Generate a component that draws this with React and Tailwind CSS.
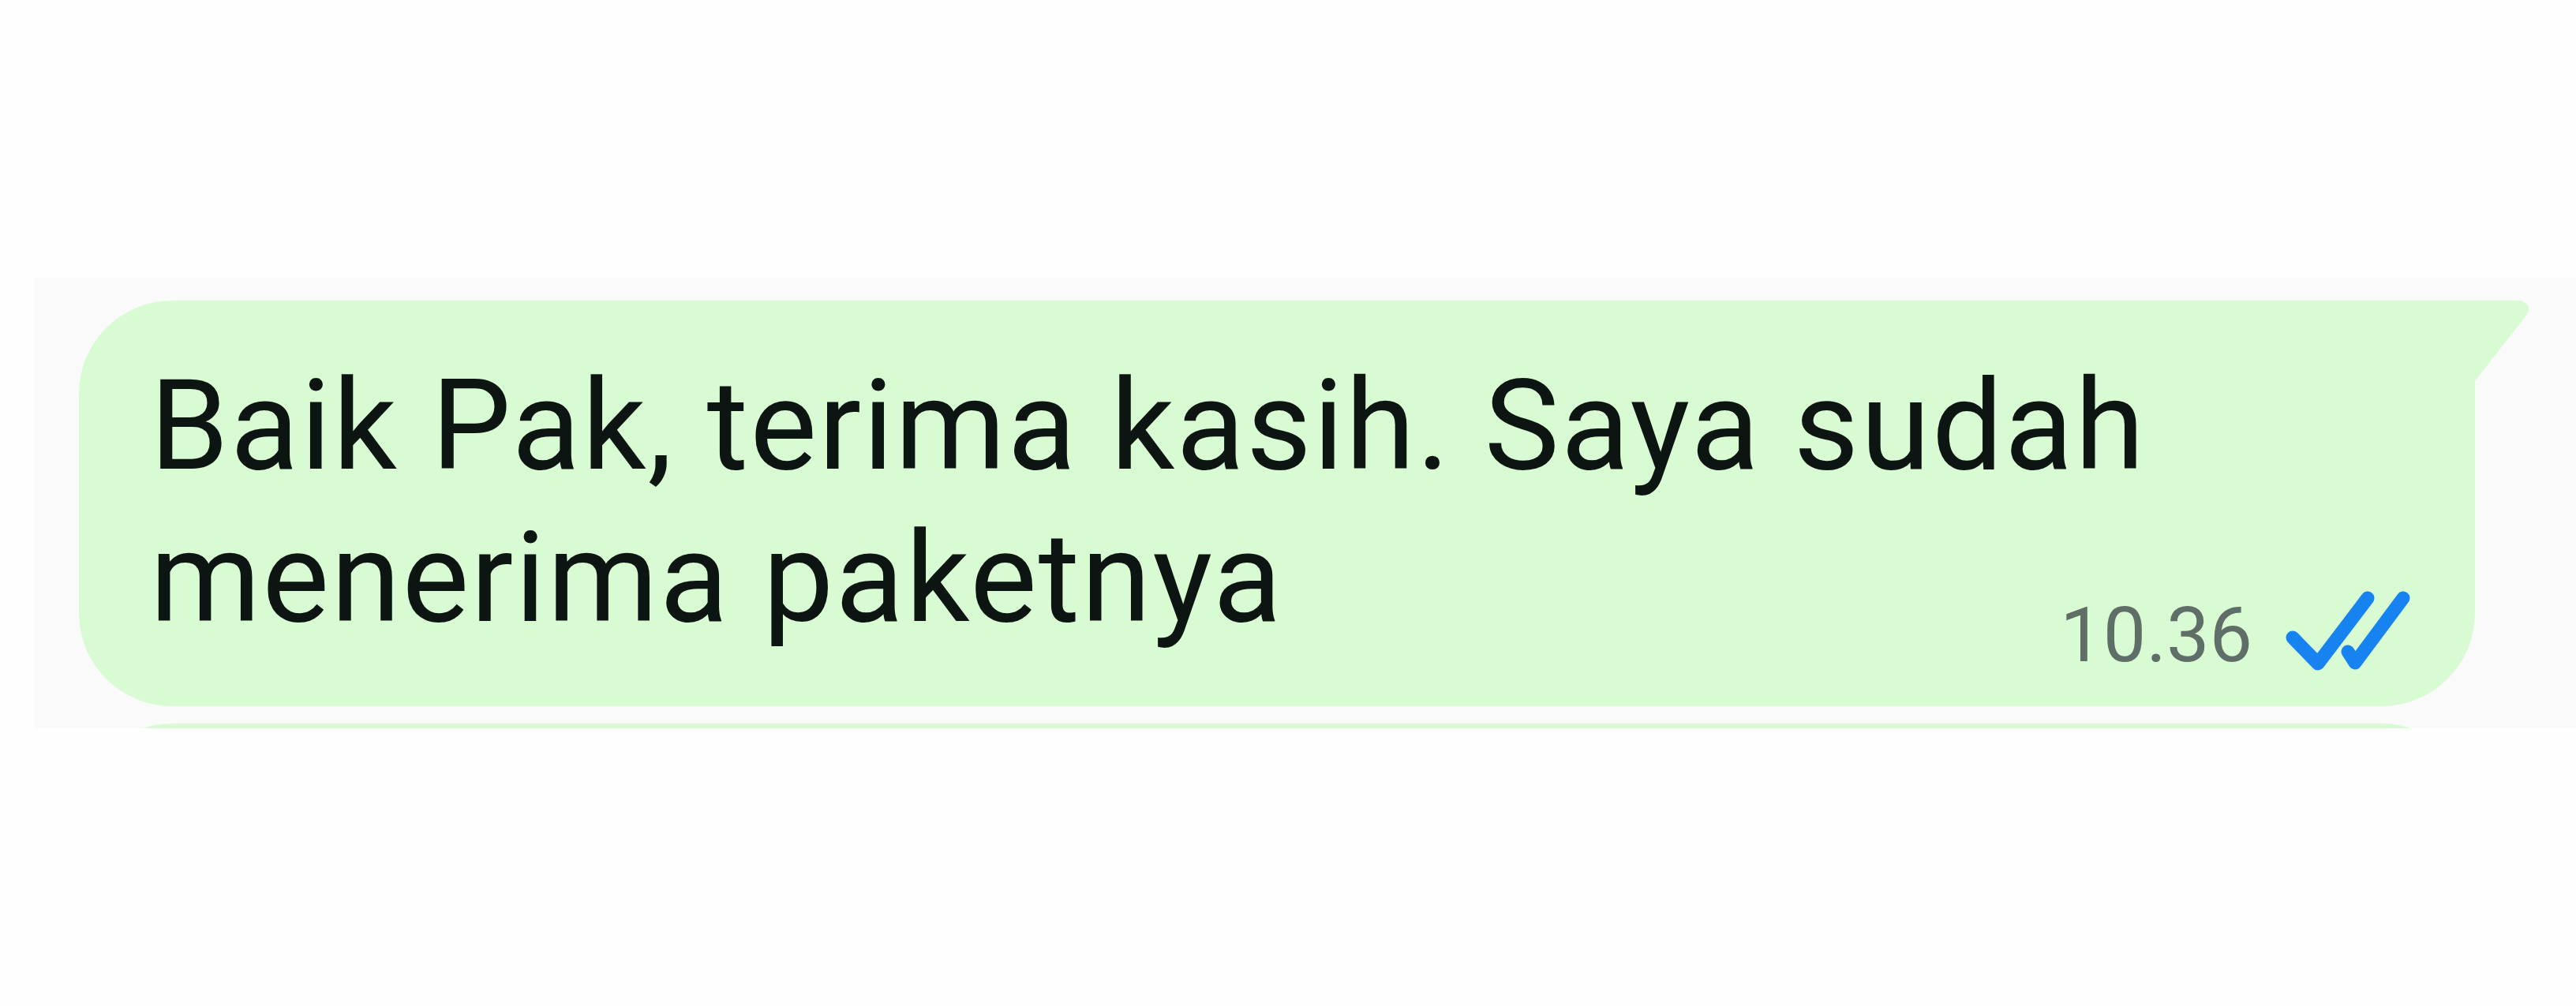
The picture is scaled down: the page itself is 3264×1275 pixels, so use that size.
export default function App() {
  return (
    <div className="min-h-[1275px] w-[3264px] bg-[#fefefe] pt-[352px]" style={{ fontFamily: "Roboto, 'Noto Sans', sans-serif" }}>
      <div className="ml-[43px] h-[571px] overflow-hidden bg-[#fafafb] pt-[29px]">
        <div className="relative ml-[57px] w-[3036px] rounded-[118px] rounded-tr-none bg-[#d9fbd3] pl-[90px] pr-[82px] pt-[62px] pb-[66px]">
          <svg className="absolute left-full top-0" width="70" height="104" viewBox="0 0 70 104">
            <path d="M0 0 H54 C66 0 73 9 64 20 L0 102 Z" fill="#d9fbd3" />
          </svg>
          <div className="text-[160px] leading-[193px] text-[#0c1511] tracking-[2px] whitespace-nowrap">
            Baik Pak, terima kasih. Saya sudah
          </div>
          <div className="flex items-end justify-between">
            <span className="text-[160px] leading-[193px] text-[#0c1511] tracking-[2px] whitespace-nowrap">
              menerima paketnya
            </span>
            <div className="-mb-[24px] flex h-[95px] items-center gap-[40px]">
              <span className="text-[97px] leading-[95px] text-[#5f6e66]">10.36</span>
              <svg width="160" height="102" viewBox="0 0 160 102" className="-mt-[14px]">
                <path d="M11 60 L43 93 L106 10" fill="none" stroke="#1783f1" strokeWidth="17" strokeLinecap="round" strokeLinejoin="round" />
                <path d="M81 78 L90 92 L151 10" fill="none" stroke="#1783f1" strokeWidth="17" strokeLinecap="round" strokeLinejoin="round" />
              </svg>
            </div>
          </div>
        </div>
        <div className="ml-[57px] mt-[22px] h-[300px] w-[3036px] rounded-[118px] bg-[#d9fbd3]" />
      </div>
    </div>
  );
}
